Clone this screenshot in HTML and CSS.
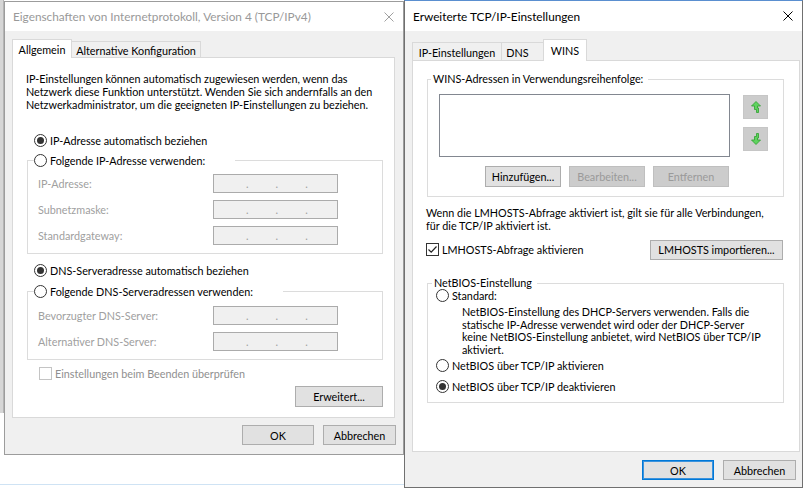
FILE: index.html
```html
<!DOCTYPE html>
<html lang="de">
<head>
    <meta charset="UTF-8">
    <link rel="stylesheet" href="styles.css">
    <title>TCP/IPv4 Einstellungen</title>
</head>
<body>
<div class="desktop">
    <div class="behind"></div>

    <div class="left-col">
        <div class="window inactive props">
            <div class="titlebar">
                <span class="title">Eigenschaften von Internetprotokoll, Version 4 (TCP/IPv4)</span>
                <svg class="close" width="10" height="10" viewBox="0 0 10 10"><path d="M0.5 0.5L9.5 9.5M9.5 0.5L0.5 9.5"/></svg>
            </div>
            <div class="client">
                <div class="tabs">
                    <div class="tab active tab-general">Allgemein</div>
                    <div class="tab tab-alt">Alternative Konfiguration</div>
                </div>
                <div class="panel">
                    <p class="intro">IP-Einstellungen können automatisch zugewiesen werden, wenn das<br>Netzwerk diese Funktion unterstützt. Wenden Sie sich andernfalls an den<br>Netzwerkadministrator, um die geeigneten IP-Einstellungen zu beziehen.</p>

                    <div class="radio checked auto-ip"><span class="dot"></span>IP-Adresse automatisch beziehen</div>
                    <fieldset class="group ip-group">
                        <legend class="ip-legend"><span class="radio"><span class="dot"></span>Folgende IP-Adresse verwenden:</span></legend>
                        <div class="field-row"><span class="field-label">IP-Adresse:</span><span class="ip-field"><i>.</i><i>.</i><i>.</i></span></div>
                        <div class="field-row"><span class="field-label">Subnetzmaske:</span><span class="ip-field"><i>.</i><i>.</i><i>.</i></span></div>
                        <div class="field-row"><span class="field-label">Standardgateway:</span><span class="ip-field"><i>.</i><i>.</i><i>.</i></span></div>
                    </fieldset>

                    <div class="radio checked auto-dns"><span class="dot"></span>DNS-Serveradresse automatisch beziehen</div>
                    <fieldset class="group dns-group">
                        <legend class="dns-legend"><span class="radio"><span class="dot"></span>Folgende DNS-Serveradressen verwenden:</span></legend>
                        <div class="field-row"><span class="field-label">Bevorzugter DNS-Server:</span><span class="ip-field"><i>.</i><i>.</i><i>.</i></span></div>
                        <div class="field-row"><span class="field-label">Alternativer DNS-Server:</span><span class="ip-field"><i>.</i><i>.</i><i>.</i></span></div>
                    </fieldset>

                    <div class="checkrow disabled validate"><span class="check"></span>Einstellungen beim Beenden überprüfen</div>
                    <button class="btn advanced" type="button">Erweitert...</button>
                </div>
                <div class="dialog-buttons">
                    <button class="btn" type="button">OK</button>
                    <button class="btn" type="button">Abbrechen</button>
                </div>
            </div>
        </div>
        <div class="taskline"></div>
    </div>

    <div class="window active adv">
        <div class="titlebar">
            <span class="title">Erweiterte TCP/IP-Einstellungen</span>
            <svg class="close" width="10" height="10" viewBox="0 0 10 10"><path d="M0.5 0.5L9.5 9.5M9.5 0.5L0.5 9.5"/></svg>
        </div>
        <div class="client">
            <div class="tabs">
                <div class="tab tab-ip">IP-Einstellungen</div>
                <div class="tab tab-dns">DNS</div>
                <div class="tab active tab-wins">WINS</div>
            </div>
            <div class="panel">
                <fieldset class="group wins-group">
                    <legend class="text-legend">WINS-Adressen in Verwendungsreihenfolge:</legend>
                    <div class="list-row">
                        <div class="listbox"></div>
                        <div class="move-buttons">
                            <span class="move-btn">
                                <svg width="10" height="12" viewBox="0 0 10 12"><path d="M5 0.5L9.5 5H6.5V7H7.5V11.5H5.5V8.5H3.5V5H0.5Z"/></svg>
                            </span>
                            <span class="move-btn">
                                <svg width="10" height="12" viewBox="0 0 10 12"><path d="M5 11.5L9.5 7H6.5V5H7.5V0.5H5.5V3.5H3.5V7H0.5Z"/></svg>
                            </span>
                        </div>
                    </div>
                    <div class="wins-buttons">
                        <button class="btn" type="button">Hinzufügen...</button>
                        <button class="btn" type="button" disabled>Bearbeiten...</button>
                        <button class="btn" type="button" disabled>Entfernen</button>
                    </div>
                </fieldset>

                <p class="lmhosts-info">Wenn die LMHOSTS-Abfrage aktiviert ist, gilt sie für alle Verbindungen,<br>für die TCP/IP aktiviert ist.</p>
                <div class="lmhosts-row">
                    <div class="checkrow"><span class="check on"><svg width="11" height="11" viewBox="0 0 11 11"><path d="M1.5 5.5L4.2 8.2L9.5 2.5"/></svg></span>LMHOSTS-Abfrage aktivieren</div>
                    <button class="btn import" type="button">LMHOSTS importieren...</button>
                </div>

                <fieldset class="group netbios-group">
                    <legend class="text-legend">NetBIOS-Einstellung</legend>
                    <div class="radio nb-standard"><span class="dot"></span>Standard:</div>
                    <p class="nb-desc">NetBIOS-Einstellung des DHCP-Servers verwenden. Falls die<br>statische IP-Adresse verwendet wird oder der DHCP-Server<br>keine NetBIOS-Einstellung anbietet, wird NetBIOS über TCP/IP<br>aktiviert.</p>
                    <div class="radio nb-on"><span class="dot"></span>NetBIOS über TCP/IP aktivieren</div>
                    <div class="radio checked nb-off"><span class="dot"></span>NetBIOS über TCP/IP deaktivieren</div>
                </fieldset>
            </div>
            <div class="dialog-buttons">
                <button class="btn default" type="button">OK</button>
                <button class="btn" type="button">Abbrechen</button>
            </div>
        </div>
    </div>
</div>
</body>
</html>
```

FILE: styles.css
```css
body {
    margin: 0;
    background-color: #ffffff;
    font-family: Lato, "Noto Sans", sans-serif;
    font-size: 10.8px;
    color: #000;
}

.desktop {
    display: flex;
    align-items: flex-start;
    height: 488px;
    overflow: hidden;
}

/* Stück eines Fensters dahinter */
.behind {
    flex: none;
    width: 4px;
    height: 413px;
    box-sizing: border-box;
    background-color: #d6d6d6;
    border-right: 1px solid #b4b4b4;
}

.left-col {
    flex: none;
    display: flex;
    flex-direction: column;
}

.taskline {
    height: 1px;
    margin-top: 29px;
    margin-left: -4px;
    background-color: #cfe3f4;
}

.window {
    flex: none;
    box-sizing: border-box;
    display: flex;
    flex-direction: column;
    background-color: #f0f0f0;
}

.props {
    width: 400px;
    height: 454px;
    margin-top: 1px;
    border: 1px solid #9c9c9c;
}

.adv {
    width: 399px;
    height: 488px;
    border: 1px solid #707070;
    border-top-color: #5a8fd0;
}

.titlebar {
    flex: none;
    display: flex;
    align-items: center;
    justify-content: space-between;
    padding-left: 8px;
    background-color: #ffffff;
}

.props .titlebar {
    height: 29px;
}

.adv .titlebar {
    height: 30px;
}

.title {
    white-space: nowrap;
    font-size: 11.8px;
}

.inactive .title {
    color: #999999;
}

.close {
    display: block;
    margin-right: 9px;
    fill: none;
    stroke: #000;
    stroke-width: 1;
}

.inactive .close {
    stroke: #a0a0a0;
}

.client {
    flex: 1;
    display: flex;
    flex-direction: column;
    padding-top: 8px;
}

.props .client {
    padding-left: 7px;
    padding-right: 8px;
}

.adv .client {
    padding-left: 7px;
    padding-right: 2px;
}

/* Reiter */
.tabs {
    display: flex;
    align-items: flex-end;
}

.tab {
    box-sizing: border-box;
    display: flex;
    align-items: center;
    justify-content: center;
    border: 1px solid #d9d9d9;
    border-bottom: none;
    background-color: #f0f0f0;
    white-space: nowrap;
    margin-left: -1px;
}

.tab:first-child {
    margin-left: 0;
}

.tab.active {
    position: relative;
    background-color: #ffffff;
}

.props .tab {
    height: 17px;
}

.props .tab.active {
    height: 19px;
}

.adv .tab {
    height: 19px;
}

.adv .tab.active {
    height: 22px;
}

.tab-general { width: 60px; }
.tab-alt { width: 130px; }
.tab-ip { width: 90px; }
.tab-dns { width: 43px; padding-right: 10px; }
.tab-wins { width: 44px; }

.panel {
    box-sizing: border-box;
    display: flex;
    flex-direction: column;
    margin-top: -1px;
    background-color: #ffffff;
    border: 1px solid #d9d9d9;
}

.props .panel {
    height: 361px;
}

.adv .panel {
    height: 392px;
}

p {
    margin: 0;
    white-space: nowrap;
}

.intro {
    margin: 13.5px 0 0 13px;
    line-height: 13px;
}

/* Optionsfelder und Kontrollkästchen */
.radio {
    display: flex;
    align-items: center;
    gap: 3px;
    height: 16px;
    white-space: nowrap;
}

.dot {
    flex: none;
    box-sizing: border-box;
    display: flex;
    align-items: center;
    justify-content: center;
    width: 13px;
    height: 13px;
    border: 1px solid #333333;
    border-radius: 50%;
    background-color: #ffffff;
}

.checked .dot::after {
    content: "";
    width: 7px;
    height: 7px;
    border-radius: 50%;
    background-color: #333333;
}

.checkrow {
    display: flex;
    align-items: center;
    gap: 3px;
    height: 16px;
    white-space: nowrap;
}

.check {
    flex: none;
    box-sizing: border-box;
    display: flex;
    align-items: center;
    justify-content: center;
    width: 13px;
    height: 13px;
    border: 1px solid #333333;
    background-color: #ffffff;
}

.check svg {
    fill: none;
    stroke: #222;
    stroke-width: 1.2;
}

.checkrow.disabled {
    color: #8f8f8f;
}

.checkrow.disabled .check {
    border-color: #c4c4c4;
}

/* Gruppenfelder */
.group {
    box-sizing: border-box;
    margin: 0;
    padding: 0;
    border: 1px solid #dcdcdc;
    min-width: 0;
}

.group legend {
    padding: 0;
}

.auto-ip {
    margin: 21.5px 0 0 21px;
}

.ip-group {
    width: 356px;
    margin: 4px 0 0 14px;
    padding-bottom: 8px;
}

.ip-legend {
    margin-left: 6px;
    padding-right: 30px !important;
    background-color: #ffffff;
}

.auto-dns {
    margin: 8px 0 0 21px;
}

.dns-group {
    width: 356px;
    margin: 5px 0 0 14px;
    padding-bottom: 8px;
}

.dns-legend {
    margin-left: 6px;
    padding-right: 30px !important;
}

.field-row {
    display: flex;
    align-items: center;
    height: 19px;
    margin-top: 7px;
    padding-left: 10px;
    color: #a0a0a0;
}

.ip-legend + .field-row {
    margin-top: 6px;
}

.field-label {
    width: 175px;
    white-space: nowrap;
}

.ip-field {
    box-sizing: border-box;
    display: flex;
    align-items: center;
    gap: 27px;
    width: 125px;
    height: 19px;
    padding-left: 32px;
    border: 1px solid #ababab;
    background-color: #f0f0f0;
}

.ip-field i {
    font-style: normal;
    line-height: 12px;
}

.validate {
    margin: 5px 0 0 26px;
}

/* Schaltflächen */
.btn {
    box-sizing: border-box;
    height: 20px;
    padding: 0;
    border: 1px solid #adadad;
    background-color: #e1e1e1;
    font-family: inherit;
    font-size: 10.8px;
    color: #000;
}

.btn:disabled {
    border-color: #bfbfbf;
    background-color: #cccccc;
    color: #9a9a9a;
}

.btn.default {
    border-color: #0078d7;
    box-shadow: inset 0 0 0 1px #3c93dd;
}

.advanced {
    align-self: flex-end;
    width: 88px;
    height: 21px;
    margin: 5px 11px 0 0;
}

.dialog-buttons {
    display: flex;
    justify-content: flex-end;
    gap: 9px;
    margin-top: 7px;
}

.dialog-buttons .btn:first-child {
    width: 72px;
}

.dialog-buttons .btn:last-child {
    width: 73px;
}

.props .dialog-buttons {
    margin-right: -1px;
}

.adv .dialog-buttons {
    margin-top: 8px;
    margin-right: 4px;
}

/* WINS-Reiter */
.text-legend {
    padding: 0 5px 0 2px !important;
    line-height: 14px;
    white-space: nowrap;
}

.wins-group {
    width: 357px;
    margin: 11px 0 0 14px;
    padding-bottom: 9px;
}

.wins-group .text-legend {
    margin-left: 3px;
}

.list-row {
    display: flex;
    align-items: flex-start;
    margin: 8px 0 0 11px;
}

.listbox {
    box-sizing: border-box;
    width: 291px;
    height: 63px;
    border: 1px solid #828790;
    background-color: #ffffff;
}

.move-buttons {
    display: flex;
    flex-direction: column;
    gap: 8px;
    margin: 1px 0 0 13px;
}

.move-btn {
    box-sizing: border-box;
    display: flex;
    align-items: center;
    justify-content: center;
    width: 25px;
    height: 24px;
    border: 1px solid #c6c6c6;
    background-color: #cccccc;
}

.move-btn svg {
    fill: #5fd35f;
    stroke: #2f9f2f;
    stroke-width: 0.8;
}

.wins-buttons {
    display: flex;
    gap: 8px;
    margin: 9px 0 0 57px;
}

.wins-buttons .btn {
    width: 76px;
    height: 21px;
}

.lmhosts-info {
    margin: 8.5px 0 0 13px;
    line-height: 13px;
}

.lmhosts-row {
    display: flex;
    align-items: center;
    justify-content: space-between;
    height: 21px;
    margin: 7.5px 16px 0 13px;
}

.import {
    width: 133px;
}

.netbios-group {
    width: 357px;
    margin: 16px 0 0 14px;
    padding-bottom: 8px;
}

.netbios-group .text-legend {
    margin-left: 4px;
}

.netbios-group .radio {
    margin-left: 8px;
}

.nb-standard {
    margin-top: -3px;
}

.nb-desc {
    margin: 3px 0 0 34px;
    line-height: 12.5px;
}

.nb-on {
    margin-top: 1px;
}

.nb-off {
    margin-top: 5px;
}
```
